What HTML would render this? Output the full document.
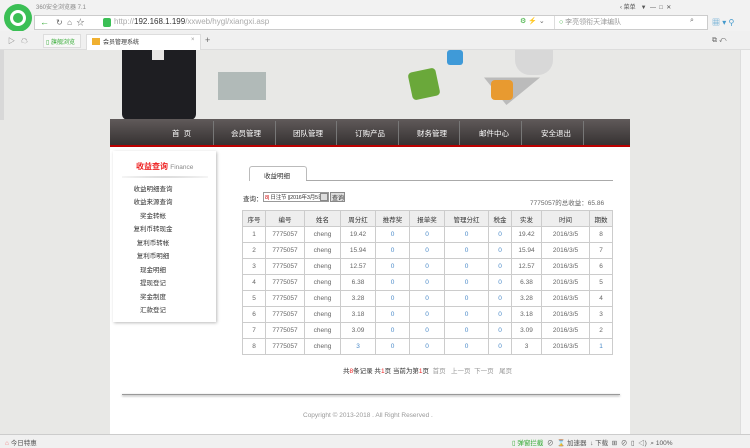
<!DOCTYPE html>
<html><head><meta charset="utf-8"><style>
*{margin:0;padding:0;box-sizing:border-box}
body{width:750px;height:448px;overflow:hidden;position:relative;font-family:"Liberation Sans","Noto Sans CJK SC",sans-serif;font-size:7px;color:#444;background:#f2f2f2}
.a{position:absolute}
.t{position:absolute;white-space:nowrap}
table{border-collapse:collapse;position:absolute;left:242px;top:210px;width:371px}
td{border:1px solid #ccc;height:16px;text-align:center;font-size:6.5px;color:#666}
tr.h td{background:#eee;color:#333}
td.b{color:#4a8ac8}
.nav span{position:absolute;top:128px;color:#fff;font-size:7.5px}
.menu div{position:absolute;left:120px;width:66px;text-align:center;font-size:6.5px;color:#333}
</style></head><body>
<div class="a" style="left:4px;top:4px;width:28px;height:28px;border-radius:50%;background:#3bbf55"></div>
<div class="a" style="left:10px;top:10px;width:16px;height:16px;border-radius:50%;border:3px solid #fff"></div>
<div class="t" style="left:36px;top:2px;font-size:6px;color:#888">360安全浏览器 7.1</div>
<div class="t" style="left:620px;top:2px;font-size:6px;color:#555">‹ 菜单 &nbsp; ▼ &nbsp;— &nbsp;□ &nbsp;✕</div>
<div class="a" style="left:34px;top:15px;width:674px;height:15px;background:#fff;border:1px solid #ccc"></div>
<div class="t" style="left:40px;top:17px;font-size:9px;color:#3a3">←</div>
<div class="t" style="left:56px;top:17px;font-size:8px;color:#666">↻ &nbsp;⌂ &nbsp;☆</div>
<div class="a" style="left:103px;top:18px;width:8px;height:9px;background:#3bbf55;border-radius:2px"></div>
<div class="t" style="left:114px;top:17px;font-size:8px;color:#aaa">http://<span style="color:#333">192.168.1.199</span>/xxweb/hygl/xiangxi.asp</div>
<div class="t" style="left:520px;top:17px;font-size:7px;color:#3a3">⚙ ⚡ <span style="color:#666">⌄</span></div>
<div class="a" style="left:554px;top:16px;width:1px;height:13px;background:#ddd"></div>
<div class="t" style="left:559px;top:17px;font-size:7px;color:#999"><span style="color:#3a3">○</span> 李亮领衔天津编队</div>
<div class="t" style="left:690px;top:17px;font-size:7px;color:#666">⌕</div>
<div class="t" style="left:712px;top:17px;font-size:8px;color:#49c">▦ ▾ ⚲</div>
<div class="a" style="left:0;top:31px;width:750px;height:19px;background:#f0f0f0;border-bottom:1px solid #ddd"></div>
<div class="t" style="left:8px;top:36px;font-size:7px;color:#666">▷ &nbsp; ☁</div>
<div class="a" style="left:43px;top:34px;width:38px;height:14px;border:1px solid #ddd;background:#f8f8f8"></div>
<div class="t" style="left:46px;top:37px;font-size:6px;color:#3a3">▯ 旗舰浏览</div>
<div class="a" style="left:86px;top:34px;width:115px;height:16px;background:#fff;border:1px solid #ddd;border-bottom:none"></div>
<div class="a" style="left:92px;top:38px;width:8px;height:7px;background:#f0b030"></div>
<div class="t" style="left:103px;top:37px;font-size:6px;color:#333">会员管理系统</div>
<div class="t" style="left:191px;top:37px;font-size:6px;color:#999">×</div>
<div class="t" style="left:205px;top:35px;font-size:9px;color:#666">+</div>
<div class="t" style="left:712px;top:37px;font-size:7px;color:#666">⧉ ↶</div>
<div class="a" style="left:0;top:50px;width:740px;height:384px;background:#e8e8e6"></div>
<div class="a" style="left:740px;top:50px;width:10px;height:384px;background:#f4f4f4;border-left:1px solid #ddd"></div>
<div class="a" style="left:0;top:50px;width:4px;height:70px;background:#d8d8d8"></div>
<div class="a" style="left:122px;top:50px;width:74px;height:70px;background:#1e1e22;border-radius:0 0 6px 6px"></div>
<div class="a" style="left:152px;top:50px;width:12px;height:10px;background:#e8e6e4"></div>
<div class="a" style="left:218px;top:72px;width:48px;height:28px;background:#9aa6a4;opacity:.7"></div>
<div class="a" style="left:410px;top:70px;width:28px;height:28px;background:#6aa83a;border-radius:4px;transform:rotate(-12deg)"></div>
<div class="a" style="left:447px;top:50px;width:16px;height:15px;background:#3f9ad8;border-radius:3px"></div>
<div class="a" style="left:484px;top:50px;width:56px;height:55px;background:#bbb;clip-path:polygon(0 50%,100% 50%,40% 100%)"></div>
<div class="a" style="left:515px;top:50px;width:38px;height:25px;background:#d8d8d8;border-radius:0 0 15px 15px"></div>
<div class="a" style="left:491px;top:80px;width:22px;height:20px;background:#e89a30;border-radius:4px"></div>
<div class="a" style="left:110px;top:119px;width:520px;height:28px;background:linear-gradient(#605a5a,#363232);border-bottom:2px solid #b00"></div>
<div class="nav">
<span style="left:172px">首&nbsp;&nbsp;页</span>
<span style="left:231px">会员管理</span>
<span style="left:293px">团队管理</span>
<span style="left:355px">订购产品</span>
<span style="left:417px">财务管理</span>
<span style="left:479px">邮件中心</span>
<span style="left:541px">安全退出</span>
</div>
<div class="a" style="left:213px;top:121px;width:1px;height:24px;background:#777;box-shadow:62px 0 #777,123px 0 #777,185px 0 #777,246px 0 #777,308px 0 #777,370px 0 #777"></div>
<div class="a" style="left:110px;top:147px;width:520px;height:287px;background:#fff"></div>
<div class="a" style="left:113px;top:151px;width:103px;height:171px;background:#fff;box-shadow:1px 1px 3px #bbb"></div>
<div class="t" style="left:136px;top:161px;font-size:8px;color:#e22;font-weight:bold">收益查询 <span style="color:#888;font-weight:normal;font-size:6.5px">Finance</span></div>
<div class="a" style="left:122px;top:176px;width:86px;height:2px;background:radial-gradient(#ccc,transparent)"></div>
<div class="menu">
<div style="top:183px">收益明细查询</div><div style="top:196px">收益来源查询</div><div style="top:210px">奖金转帐</div><div style="top:223px">复利币转现金</div><div style="top:237px">复利币转帐</div><div style="top:250px">复利币明细</div><div style="top:264px">现金明细</div><div style="top:277px">提现登记</div><div style="top:291px">奖金制度</div><div style="top:304px">汇款登记</div>
</div>
<div class="a" style="left:249px;top:166px;width:58px;height:15px;border:1px solid #bbb;border-bottom:none;border-radius:3px 3px 0 0;background:#fff"></div>
<div class="t" style="left:264px;top:170px;font-size:6.5px;color:#333">收益明细</div>
<div class="a" style="left:306px;top:180px;width:307px;height:1px;background:#aaa"></div>
<div class="t" style="left:243px;top:193px;font-size:6.5px;color:#333">查询：</div>
<div class="a" style="left:263px;top:192px;width:66px;height:10px;border:1px solid #999;background:#fff;overflow:hidden"></div>
<div class="t" style="left:265px;top:193px;font-size:5.5px;color:#333;letter-spacing:-0.2px"><span style="color:#c00">8|</span> 日注节 ||2016年3月5日|</div>
<div class="a" style="left:320px;top:193px;width:8px;height:8px;background:#ddd;border:1px solid #888"></div>
<div class="a" style="left:330px;top:192px;width:15px;height:10px;background:#ddd;border:1px solid #888"></div>
<div class="t" style="left:332px;top:193px;font-size:6px;color:#333">查询</div>
<div class="t" style="left:530px;top:200px;font-size:6.5px;color:#666;line-height:8px">7775057的总收益：65.86</div>
<table>
<tr class="h"><td style="width:23px">序号</td><td style="width:39px">编号</td><td style="width:36px">姓名</td><td style="width:35px">周分红</td><td style="width:34px">推荐奖</td><td style="width:35px">报单奖</td><td style="width:44px">管理分红</td><td style="width:23px">税金</td><td style="width:30px">实发</td><td style="width:48px">时间</td><td>期数</td></tr>
<tr><td>1</td><td>7775057</td><td>cheng</td><td>19.42</td><td class="b">0</td><td class="b">0</td><td class="b">0</td><td class="b">0</td><td>19.42</td><td>2016/3/5</td><td>8</td></tr>
<tr><td>2</td><td>7775057</td><td>cheng</td><td>15.94</td><td class="b">0</td><td class="b">0</td><td class="b">0</td><td class="b">0</td><td>15.94</td><td>2016/3/5</td><td>7</td></tr>
<tr><td>3</td><td>7775057</td><td>cheng</td><td>12.57</td><td class="b">0</td><td class="b">0</td><td class="b">0</td><td class="b">0</td><td>12.57</td><td>2016/3/5</td><td>6</td></tr>
<tr><td>4</td><td>7775057</td><td>cheng</td><td>6.38</td><td class="b">0</td><td class="b">0</td><td class="b">0</td><td class="b">0</td><td>6.38</td><td>2016/3/5</td><td>5</td></tr>
<tr><td>5</td><td>7775057</td><td>cheng</td><td>3.28</td><td class="b">0</td><td class="b">0</td><td class="b">0</td><td class="b">0</td><td>3.28</td><td>2016/3/5</td><td>4</td></tr>
<tr><td>6</td><td>7775057</td><td>cheng</td><td>3.18</td><td class="b">0</td><td class="b">0</td><td class="b">0</td><td class="b">0</td><td>3.18</td><td>2016/3/5</td><td>3</td></tr>
<tr><td>7</td><td>7775057</td><td>cheng</td><td>3.09</td><td class="b">0</td><td class="b">0</td><td class="b">0</td><td class="b">0</td><td>3.09</td><td>2016/3/5</td><td>2</td></tr>
<tr><td>8</td><td>7775057</td><td>cheng</td><td class="b">3</td><td class="b">0</td><td class="b">0</td><td class="b">0</td><td class="b">0</td><td>3</td><td>2016/3/5</td><td class="b">1</td></tr>
</table>
<div class="t" style="left:343px;top:365px;font-size:6.5px;color:#333">共<span style="color:#e22">8</span>条记录 共<span style="color:#e22">1</span>页 当前为第<span style="color:#e22">1</span>页 &nbsp;<span style="color:#999">首页 &nbsp; 上一页 &nbsp;下一页 &nbsp; 尾页</span></div>
<div class="a" style="left:122px;top:394px;width:498px;height:1px;background:#999;box-shadow:0 1px 2px #888"></div>
<div class="t" style="left:303px;top:412px;font-size:6.5px;color:#999">Copyright © 2013-2018 . All Right Reserved .</div>
<div class="a" style="left:0;top:434px;width:750px;height:14px;background:#f0f0f0;border-top:1px solid #ccc"></div>
<div class="t" style="left:5px;top:437px;font-size:6.5px;color:#555"><span style="color:#e77">⌂</span> 今日特惠</div>
<div class="t" style="left:512px;top:437px;font-size:6.5px;color:#555"><span style="color:#3a3">▯ 弹窗拦截</span> &nbsp;⊘ &nbsp;⌛ 加速器 &nbsp;↓ 下载 &nbsp;⊞ &nbsp;⊘ &nbsp;▯ &nbsp;◁) &nbsp;⌕ 100%</div>
</body></html>
